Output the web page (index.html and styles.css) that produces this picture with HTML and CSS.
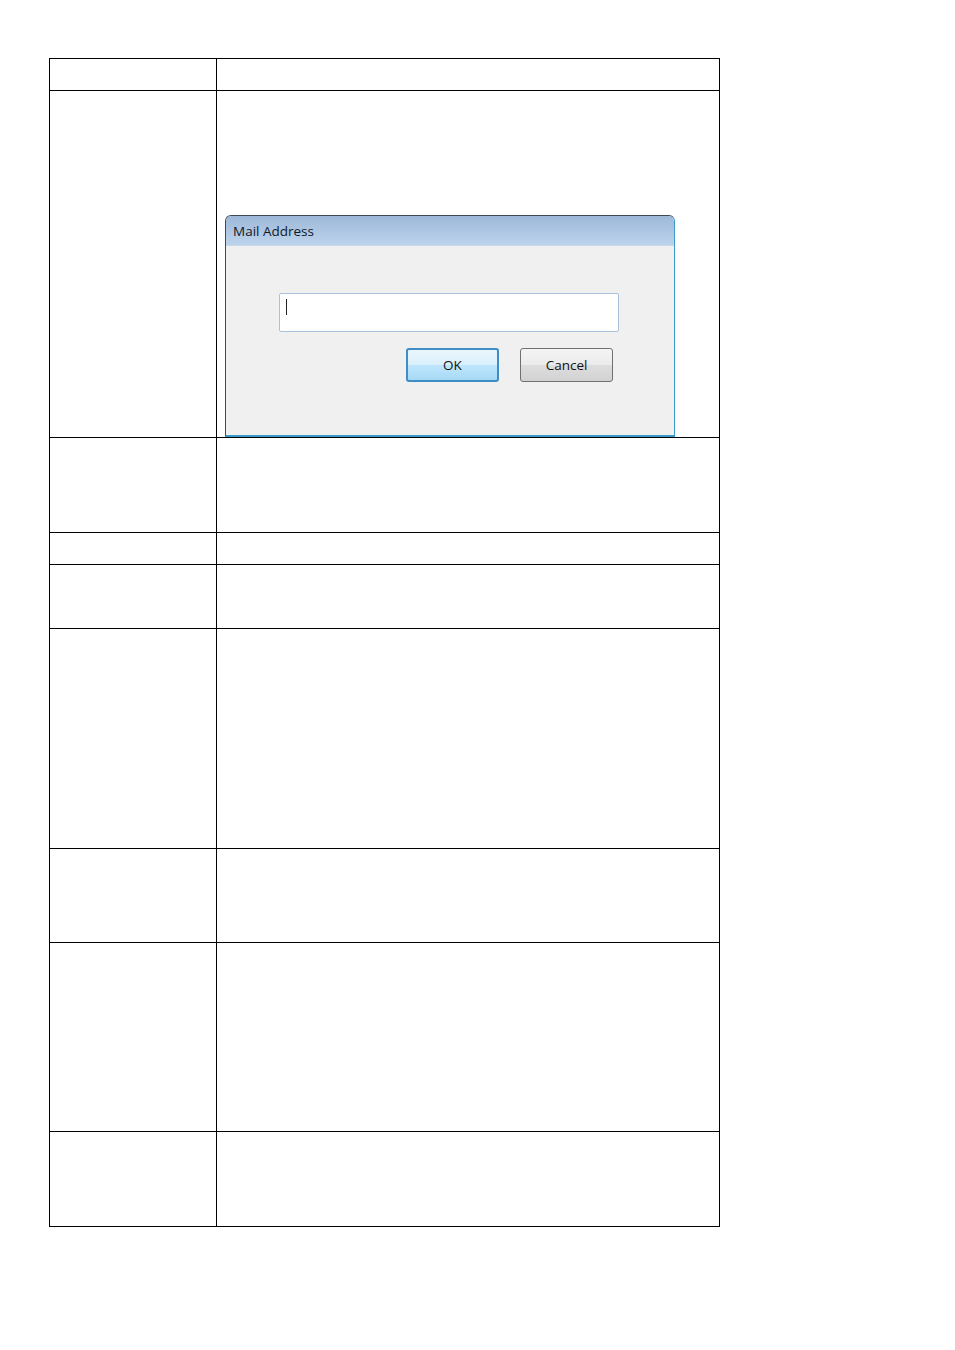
FILE: index.html
```html
<!DOCTYPE html>
<html lang="en">
<head>
    <meta charset="UTF-8">
    <title>Mail Address</title>
    <link rel="stylesheet" href="styles.css">
</head>
<body>
    <table class="spec-table">
        <colgroup>
            <col class="col-label">
            <col class="col-value">
        </colgroup>
        <tbody>
            <tr class="row-1"><td></td><td></td></tr>
            <tr class="row-2">
                <td></td>
                <td class="dialog-cell">
                    <div class="dialog">
                        <div class="dialog-title">Mail Address</div>
                        <div class="dialog-body">
                            <div class="text-input"><span class="caret"></span></div>
                            <div class="button-row">
                                <button class="btn btn-default">OK</button>
                                <button class="btn">Cancel</button>
                            </div>
                        </div>
                    </div>
                </td>
            </tr>
            <tr class="row-3"><td></td><td></td></tr>
            <tr class="row-4"><td></td><td></td></tr>
            <tr class="row-5"><td></td><td></td></tr>
            <tr class="row-6"><td></td><td></td></tr>
            <tr class="row-7"><td></td><td></td></tr>
            <tr class="row-8"><td></td><td></td></tr>
            <tr class="row-9"><td></td><td></td></tr>
        </tbody>
    </table>
</body>
</html>
```

FILE: styles.css
```css
body {
    margin: 0;
    padding: 58px 0 0 49px;
    background-color: #fff;
    font-family: 'Open Sans', 'DejaVu Sans', sans-serif;
}
.spec-table {
    border-collapse: collapse;
    table-layout: fixed;
    width: 671px;
}
.col-label {
    width: 167px;
}
.spec-table td {
    border: 1px solid #000;
    padding: 0;
}
.row-1 { height: 32px; }
.row-2 { height: 347px; }
.row-3 { height: 95px; }
.row-4 { height: 32px; }
.row-5 { height: 64px; }
.row-6 { height: 220px; }
.row-7 { height: 94px; }
.row-8 { height: 189px; }
.row-9 { height: 95px; }

/* screenshot of the dialog sits at the bottom of the cell */
.dialog-cell {
    vertical-align: bottom;
    padding-left: 8px !important;
}
.dialog {
    width: 450px;
    height: 222px;
    box-sizing: border-box;
    display: flex;
    flex-direction: column;
    background-color: #f0f0f0;
    border: 1px solid #3f4a57;
    border-right-color: #3a9ac9;
    border-bottom: 2px solid #3a9ac9;
    border-radius: 6px 6px 0 0;
    overflow: hidden;
}
.dialog-title {
    height: 30px;
    box-sizing: border-box;
    padding: 6px 0 0 7px;
    font-size: 13.5px;
    color: #0f1a28;
    background: linear-gradient(#9db8d8, #bdd3ec);
    border-bottom: 1px solid #c9d9ec;
}
.dialog-body {
    flex: 1;
    padding: 47px 0 0 53px;
}
.text-input {
    width: 340px;
    height: 39px;
    box-sizing: border-box;
    background-color: #fff;
    border: 1px solid #a9c2dc;
    border-radius: 2px;
    padding: 5px 0 0 6px;
}
.caret {
    display: block;
    width: 1px;
    height: 16px;
    background-color: #222;
}
.button-row {
    display: flex;
    gap: 21px;
    margin: 16px 0 0 127px;
}
.btn {
    width: 93px;
    height: 34px;
    box-sizing: border-box;
    font-family: inherit;
    font-size: 13.5px;
    color: #111;
    border: 1px solid #707070;
    border-radius: 3px;
    background: linear-gradient(#f4f4f4 0%, #ebebeb 50%, #dddddd 51%, #d2d2d2 100%);
    padding: 0;
}
.btn-default {
    border: 2px solid #3d8ec4;
    background: linear-gradient(#eaf6fd 0%, #d9f0fc 50%, #bee6fd 51%, #a7d9f5 100%);
}
```
